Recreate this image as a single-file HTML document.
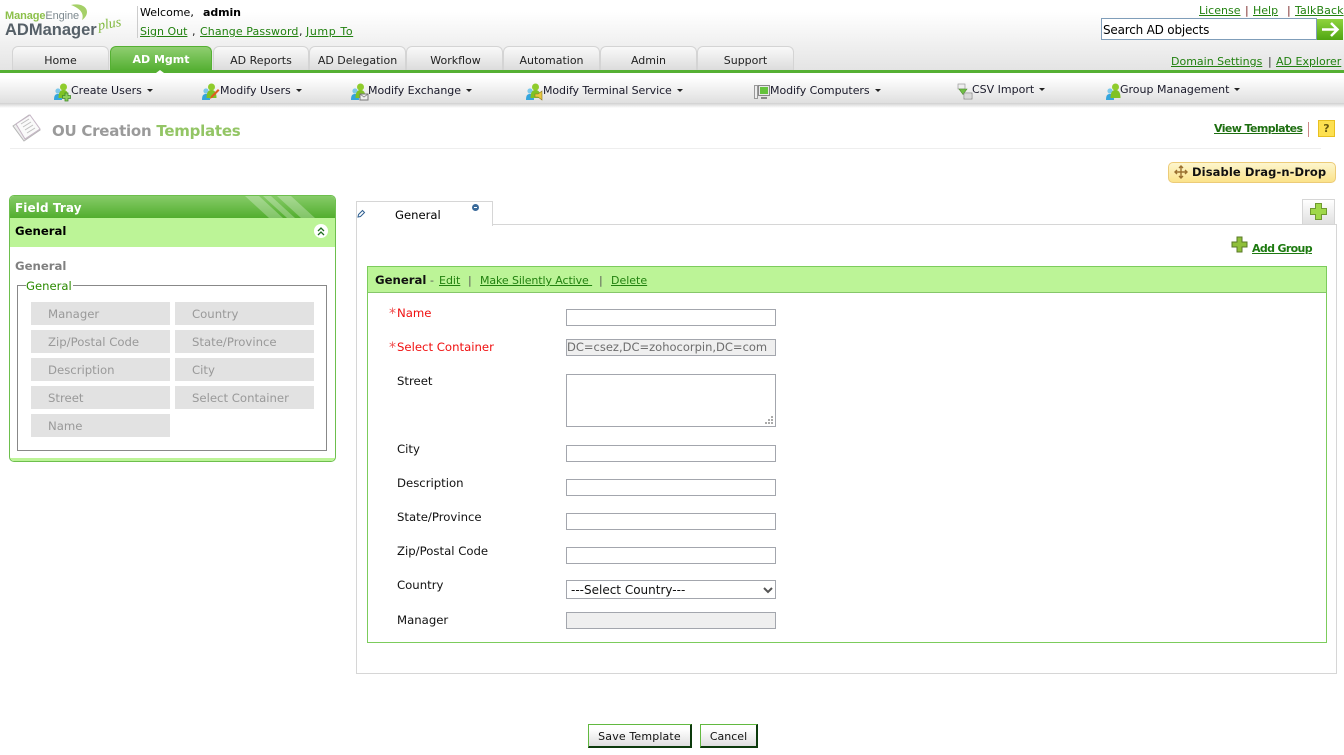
<!DOCTYPE html>
<html><head><meta charset="utf-8"><title>OU Creation Templates</title>
<style>
html,body{margin:0;padding:0;background:#fff}
body{width:1344px;height:755px;position:relative;overflow:hidden;font:11px "DejaVu Sans",Verdana,sans-serif;color:#000}
.a{position:absolute;white-space:nowrap}
.t{position:absolute;white-space:nowrap;line-height:14px}
.l{color:#21810f;text-decoration:underline}
.tab{position:absolute;top:46px;height:24px;box-sizing:border-box;border:1px solid #d4d4d4;border-bottom:0;border-radius:6px 6px 0 0;background:linear-gradient(#f9f9f9,#dcdcdc);text-align:center;line-height:27px;color:#222}
.nav{position:absolute;white-space:nowrap;line-height:14px;color:#1a1a2a}
.nav i{display:inline-block;width:0;height:0;border:3px solid transparent;border-top:3px solid #222;border-bottom:0;margin-left:5px;vertical-align:2px}
.f{position:absolute;width:139px;height:23px;background:#e2e2e2;color:#999;line-height:25px;text-indent:17px;font-size:11.700px}
.lab{position:absolute;left:397px;white-space:nowrap;line-height:14px;color:#111;font-size:11.700px}
.req{color:#f01010}
.req b{position:absolute;left:-8px;font-weight:400;color:#f05050;font-size:14px;top:1px}
.inp{position:absolute;left:566px;width:210px;height:17px;box-sizing:border-box;border:1px solid #a3a6ad;background:#fff}
.btn{position:absolute;top:724px;height:24px;box-sizing:border-box;border:1px solid #62b940;border-right:2px solid #0c3a0c;border-bottom:2px solid #0c3a0c;background:linear-gradient(#fff 20%,#dedede);text-align:center;line-height:23px;color:#111}
svg{position:absolute;overflow:visible}
</style></head>
<body>
<svg width="0" height="0" style="position:absolute"><defs>
<g id="u"><circle cx="5" cy="8" r="2.600" fill="#7cc8ea"/><path d="M1 17c0-5 1.500-6 4-6s4 1 4 6z" fill="#34a5dc"/><circle cx="10.500" cy="4" r="3.500" fill="#8fcc2c"/><path d="M5.500 15c0-6 2-8 5-8s5 2 5 8z" fill="#7fc224"/></g>
<path id="p" d="M5 0h5v5h5v5h-5v5H5v-5H0V5h5z"/>
</defs></svg>

<div class="a" style="left:0;top:0;width:1344px;height:70px;background:linear-gradient(#fff 0,#fff 12px,#e4e4e4)"></div>

<div class="t" style="left:5px;top:9px;font:bold 11px/14px 'Liberation Sans',sans-serif;color:#8cc04a;letter-spacing:-.1px">Manage<span style="font-weight:400;color:#7e8a90">Engine</span></div>
<svg style="left:70px;top:3px" width="20" height="20"><path d="M1 2c8-2 16 1 16 7 0 3-2 6-5 8 2-5 0-11-11-15z" fill="#a5d068"/></svg>
<div class="t" style="left:5px;top:20px;font:bold 16.500px/20px 'Liberation Sans',sans-serif;color:#566068">ADManager</div>
<div class="t" style="left:98px;top:18px;font:italic 14px/14px 'Liberation Serif',serif;color:#7fb83c;transform:rotate(-10deg)">plus</div>
<div class="a" style="left:137px;top:6px;width:1px;height:32px;background:#ccc"></div>
<div class="t" style="left:140px;top:6px">Welcome,</div>
<div class="t" style="left:203px;top:6px;font-weight:700;letter-spacing:-.1px">admin</div>
<div class="t" style="left:140px;top:25px;color:#222"><span class="l">Sign Out</span></div>
<div class="t" style="left:192px;top:25px;color:#222">,</div>
<div class="t" style="left:200px;top:25px;letter-spacing:.1px"><span class="l">Change Password</span></div>
<div class="t" style="left:299px;top:25px;color:#222">,</div>
<div class="t" style="left:306px;top:25px;letter-spacing:.6px"><span class="l">Jump To</span></div>

<div class="t" style="left:1199px;top:4px"><span class="l">License</span></div>
<div class="t" style="left:1245px;top:4px;color:#722">|</div>
<div class="t" style="left:1253px;top:4px"><span class="l">Help</span></div>
<div class="t" style="left:1287px;top:4px;color:#722">|</div>
<div class="t" style="left:1295px;top:4px;letter-spacing:.1px"><span class="l">TalkBack</span></div>
<div class="a" style="left:1101px;top:18px;width:216px;height:22px;box-sizing:border-box;border:1px solid #7f9db9;background:#fff;font-size:12px;line-height:22px;padding-left:1px;letter-spacing:-.2px">Search AD objects</div>
<div class="a" style="left:1317px;top:19px;width:26px;height:21px;background:linear-gradient(#8fd43c,#4fa512)"></div>
<svg style="left:1317px;top:19px" width="26" height="21"><path d="M5 10.500h15M14 4l6.500 6.500L14 17" fill="none" stroke="#fff" stroke-width="2.500"/></svg>

<div class="tab" style="left:12px;width:97px">Home</div>
<div class="tab" style="left:110px;width:102px;background:linear-gradient(#8fce70,#55b033);border:1px solid #55b033;border-bottom:0;color:#fff;font-weight:700;line-height:26px">AD Mgmt</div>
<div class="tab" style="left:213px;width:96px">AD Reports</div>
<div class="tab" style="left:309px;width:97px">AD Delegation</div>
<div class="tab" style="left:406px;width:97px;text-indent:2px">Workflow</div>
<div class="tab" style="left:503px;width:97px">Automation</div>
<div class="tab" style="left:600px;width:97px">Admin</div>
<div class="tab" style="left:697px;width:97px">Support</div>
<div class="t" style="left:1171px;top:55px"><span class="l">Domain Settings</span></div>
<div class="t" style="left:1268px;top:55px;color:#333">|</div>
<div class="t" style="left:1276px;top:55px"><span class="l">AD Explorer</span></div>

<div class="a" style="left:0;top:70px;width:1344px;height:3px;background:#55b033"></div>
<div class="a" style="left:0;top:73px;width:1344px;height:30px;background:linear-gradient(#fff 15%,#dfdfdf)"></div>
<div class="a" style="left:0;top:103px;width:1344px;height:5px;background:linear-gradient(#cfcfcf,#fff)"></div>
<svg style="left:153px;top:70px" width="14" height="4"><path d="M3 3l4-3 4 3z" fill="#fff"/></svg>

<svg style="left:53px;top:83px" width="18" height="18"><use href="#u"/><path d="M12 10h3v2.500h2.500v3H15V18h-3v-2.500H9.500v-3H12z" fill="#8fcf5a" stroke="#3f8a2c" stroke-width=".8"/></svg>
<div class="nav" style="left:71px;top:84px">Create Users<i></i></div>
<svg style="left:201px;top:83px" width="18" height="18"><use href="#u"/><path d="M9 16l1-3 7-7 1.500 1.500-7 7z" fill="#e05a20"/></svg>
<div class="nav" style="left:220px;top:84px">Modify Users<i></i></div>
<svg style="left:350px;top:83px" width="18" height="18"><use href="#u"/><rect x="10" y="11" width="8" height="6" fill="#eee" stroke="#777"/><path d="M10 11l4 3 4-3" fill="none" stroke="#777" stroke-width=".7"/></svg>
<div class="nav" style="left:368px;top:84px;letter-spacing:-.05px">Modify Exchange<i></i></div>
<svg style="left:525px;top:83px" width="18" height="18"><use href="#u"/><path d="M10 11h3l4-3v9l-4-3h-3z" fill="#e8c840" stroke="#8a7a20" stroke-width=".6"/></svg>
<div class="nav" style="left:543px;top:84px;letter-spacing:-.08px">Modify Terminal Service<i></i></div>
<svg style="left:754px;top:85px" width="16" height="15"><rect x=".5" y=".5" width="3" height="13" fill="#eee" stroke="#999"/><rect x="4.500" y=".5" width="11" height="10" fill="#e8e8e8" stroke="#888"/><rect x="6" y="2" width="8" height="7" fill="#64c23c"/><path d="M7 13h6" stroke="#888" stroke-width="2"/></svg>
<div class="nav" style="left:770px;top:84px;letter-spacing:-.05px">Modify Computers<i></i></div>
<svg style="left:957px;top:83px" width="16" height="17"><rect x="1" y="1" width="7" height="5" fill="#eee" stroke="#999" stroke-width=".7"/><path d="M2 6h8l-4 5.500z" fill="#6fbf45" stroke="#4d8a2c" stroke-width=".6"/><rect x="7" y="10" width="8" height="6" fill="#eee" stroke="#888" stroke-width=".8"/><path d="M8 12h6M8 14h6" stroke="#999" stroke-width=".6"/></svg>
<div class="nav" style="left:972px;top:83px">CSV Import<i></i></div>
<svg style="left:1105px;top:83px" width="18" height="18"><use href="#u"/></svg>
<div class="nav" style="left:1120px;top:83px">Group Management<i></i></div>

<svg style="left:11px;top:113px" width="32" height="30"><path d="M2 13L18 2l11 15-16 11z" fill="#eee" stroke="#b5b5b5"/><path d="M5 11l14-9 10 14-15 10z" fill="#fafafa" stroke="#c5b5c5"/><path d="M10 11l8-5M12 14l8-5M14 17l8-5M16 20l8-5" stroke="#c0c0c0"/></svg>
<div class="t" style="left:52px;top:123px;font-size:15px;line-height:17px;font-weight:700;color:#9a9a9a;letter-spacing:-.25px">OU Creation <span style="color:#93c565">Templates</span></div>
<div class="t" style="left:1214px;top:122px;font-weight:700;color:#1d6e10;text-decoration:underline;letter-spacing:-.6px">View Templates</div>
<div class="a" style="left:1308px;top:122px;width:1px;height:15px;background:#c88"></div>
<div class="a" style="left:1318px;top:120px;width:17px;height:17px;box-sizing:border-box;border:1px solid #e8c020;background:#fde050;text-align:center;font-weight:700;line-height:15px;color:#6a5a10">?</div>
<div class="a" style="left:10px;top:148px;width:1311px;height:1px;background:#eee"></div>

<div class="a" style="left:1168px;top:162px;width:168px;height:21px;box-sizing:border-box;border:1px solid #eccb78;border-radius:5px;background:linear-gradient(#fdf6cd,#fbe38a)"></div>
<svg style="left:1174px;top:165px" width="14" height="14"><path d="M7 1v12M1 7h12M5 3l2-2 2 2M5 11l2 2 2-2M3 5L1 7l2 2M11 5l2 2-2 2" fill="none" stroke="#9a7030" stroke-width="1.400"/></svg>
<div class="t" style="left:1192px;top:165px;font-weight:700;font-size:11.500px;color:#111;letter-spacing:.1px">Disable Drag-n-Drop</div>

<div class="a" style="left:9px;top:195px;width:327px;height:267px;box-sizing:border-box;border:1px solid #6dbf4d;border-radius:5px;background:#fff;overflow:hidden">
 <div class="a" style="left:0;top:0;width:325px;height:22px;background:linear-gradient(#86cb68,#52ae2e)"></div>
 <svg style="left:235px;top:0" width="90" height="22"><path d="M0 0h14l24 22H24zM18 0h8l24 22h-8zM32 0h14l24 22H56z" fill="#fff" opacity=".28"/></svg>
 <div class="t" style="left:5px;top:5px;color:#fff;font-weight:700;font-size:12px;letter-spacing:.1px">Field Tray</div>
 <div class="a" style="left:0;top:22px;width:325px;height:29px;background:#bcf497"></div>
 <div class="t" style="left:5px;top:28px;font-weight:700;font-size:11.700px">General</div>
 <div class="a" style="left:304px;top:28px;width:14px;height:14px;border-radius:7px;background:#fff"></div>
 <svg style="left:304px;top:28px" width="14" height="14"><path d="M4 7l3-3 3 3M4 11l3-3 3 3" fill="none" stroke="#1f6e1f" stroke-width="1.300"/></svg>
 <div class="t" style="left:5px;top:63px;font-weight:700;color:#808080;font-size:11.700px">General</div>
 <div class="a" style="left:0;top:262px;width:325px;height:4px;background:#bcf497"></div>
</div>
<div class="a" style="left:17px;top:285px;width:310px;height:166px;box-sizing:border-box;border:1px solid #888"></div>
<div class="t" style="left:26px;top:279px;background:#fff;color:#2b8a00;font-size:11.600px;padding-right:1px">General</div>
<div class="f" style="left:31px;top:302px">Manager</div><div class="f" style="left:175px;top:302px">Country</div>
<div class="f" style="left:31px;top:330px">Zip/Postal Code</div><div class="f" style="left:175px;top:330px">State/Province</div>
<div class="f" style="left:31px;top:358px">Description</div><div class="f" style="left:175px;top:358px">City</div>
<div class="f" style="left:31px;top:386px">Street</div><div class="f" style="left:175px;top:386px">Select Container</div>
<div class="f" style="left:31px;top:414px">Name</div>

<div class="a" style="left:356px;top:224px;width:981px;height:450px;box-sizing:border-box;border:1px solid #d6d6d6;background:#fff"></div>
<div class="a" style="left:356px;top:201px;width:137px;height:25px;box-sizing:border-box;border:1px solid #d6d6d6;border-bottom:0;background:#fff"></div>
<svg style="left:357px;top:210px" width="8" height="8"><path d="M1 7l.5-2.500L5.500 .5l2 2-4 4z" fill="#fff" stroke="#2f5f90"/></svg>
<div class="t" style="left:395px;top:208px;font-size:11.600px">General</div>
<div class="a" style="left:472px;top:204px;width:7px;height:7px;border-radius:4px;background:#3a6a9a"></div>
<div class="a" style="left:474px;top:207px;width:3px;height:1px;background:#fff"></div>
<div class="a" style="left:1302px;top:199px;width:33px;height:25px;box-sizing:border-box;border:1px solid #d6d6d6;border-bottom:0;background:linear-gradient(#fff,#e0e0e0)"></div>
<svg style="left:1310px;top:203px" width="17" height="17"><path d="M5.500.5h6v5h5v6h-5v5h-6v-5h-5v-6h5z" fill="#9fd84a" stroke="#6f9a30"/></svg>
<svg style="left:1232px;top:237px" width="15" height="15"><use href="#p" fill="#8fbf3a" stroke="#5a7a28"/></svg>
<div class="t" style="left:1252px;top:242px;font-weight:700;color:#1d7a10;text-decoration:underline;letter-spacing:-.65px">Add Group</div>

<div class="a" style="left:367px;top:266px;width:960px;height:377px;box-sizing:border-box;border:1px solid #7ccc5c;background:#fff"></div>
<div class="a" style="left:368px;top:267px;width:958px;height:25px;background:#bcf497;border-bottom:1px solid #86c76a"></div>
<div class="t" style="left:375px;top:273px;font-weight:700;color:#111;font-size:11.700px">General</div>
<div class="t" style="left:430px;top:274px;color:#555">-</div>
<div class="t" style="left:439px;top:274px"><span class="l">Edit</span></div>
<div class="t" style="left:468px;top:274px;color:#555">|</div>
<div class="t" style="left:480px;top:274px;letter-spacing:-.1px"><span class="l">Make Silently Active&nbsp;</span></div>
<div class="t" style="left:599px;top:274px;color:#555">|</div>
<div class="t" style="left:611px;top:274px"><span class="l">Delete</span></div>

<div class="lab req" style="top:306px"><b>*</b>Name</div>
<div class="lab req" style="top:340px"><b>*</b>Select Container</div>
<div class="lab" style="top:374px">Street</div>
<div class="lab" style="top:442px">City</div>
<div class="lab" style="top:476px">Description</div>
<div class="lab" style="top:510px">State/Province</div>
<div class="lab" style="top:544px">Zip/Postal Code</div>
<div class="lab" style="top:578px">Country</div>
<div class="lab" style="top:613px">Manager</div>

<div class="inp" style="top:309px"></div>
<div class="inp" style="top:339px;background:#efefef;color:#6d6d6d;line-height:15px;font-size:11.500px">DC=csez,DC=zohocorpin,DC=com</div>
<div class="inp" style="top:374px;height:53px"></div>
<svg style="left:764px;top:415px" width="10" height="10"><path d="M7 1h2v2H7zM4 4h2v2H4zM7 4h2v2H7zM1 7h2v2H1zM4 7h2v2H4zM7 7h2v2H7z" fill="#aaa"/></svg>
<div class="inp" style="top:445px"></div>
<div class="inp" style="top:479px"></div>
<div class="inp" style="top:513px"></div>
<div class="inp" style="top:547px"></div>
<div class="inp" style="top:580px;height:19px;line-height:18px;padding-left:4px;color:#111;font-size:12px">---Select Country---</div>
<svg style="left:763px;top:587px" width="10" height="7"><path d="M1 1l4 4 4-4" fill="none" stroke="#555" stroke-width="2"/></svg>
<div class="inp" style="top:612px;background:#efefef"></div>

<div class="btn" style="left:588px;width:104px;letter-spacing:.15px">Save Template</div>
<div class="btn" style="left:700px;width:58px">Cancel</div>
</body></html>
